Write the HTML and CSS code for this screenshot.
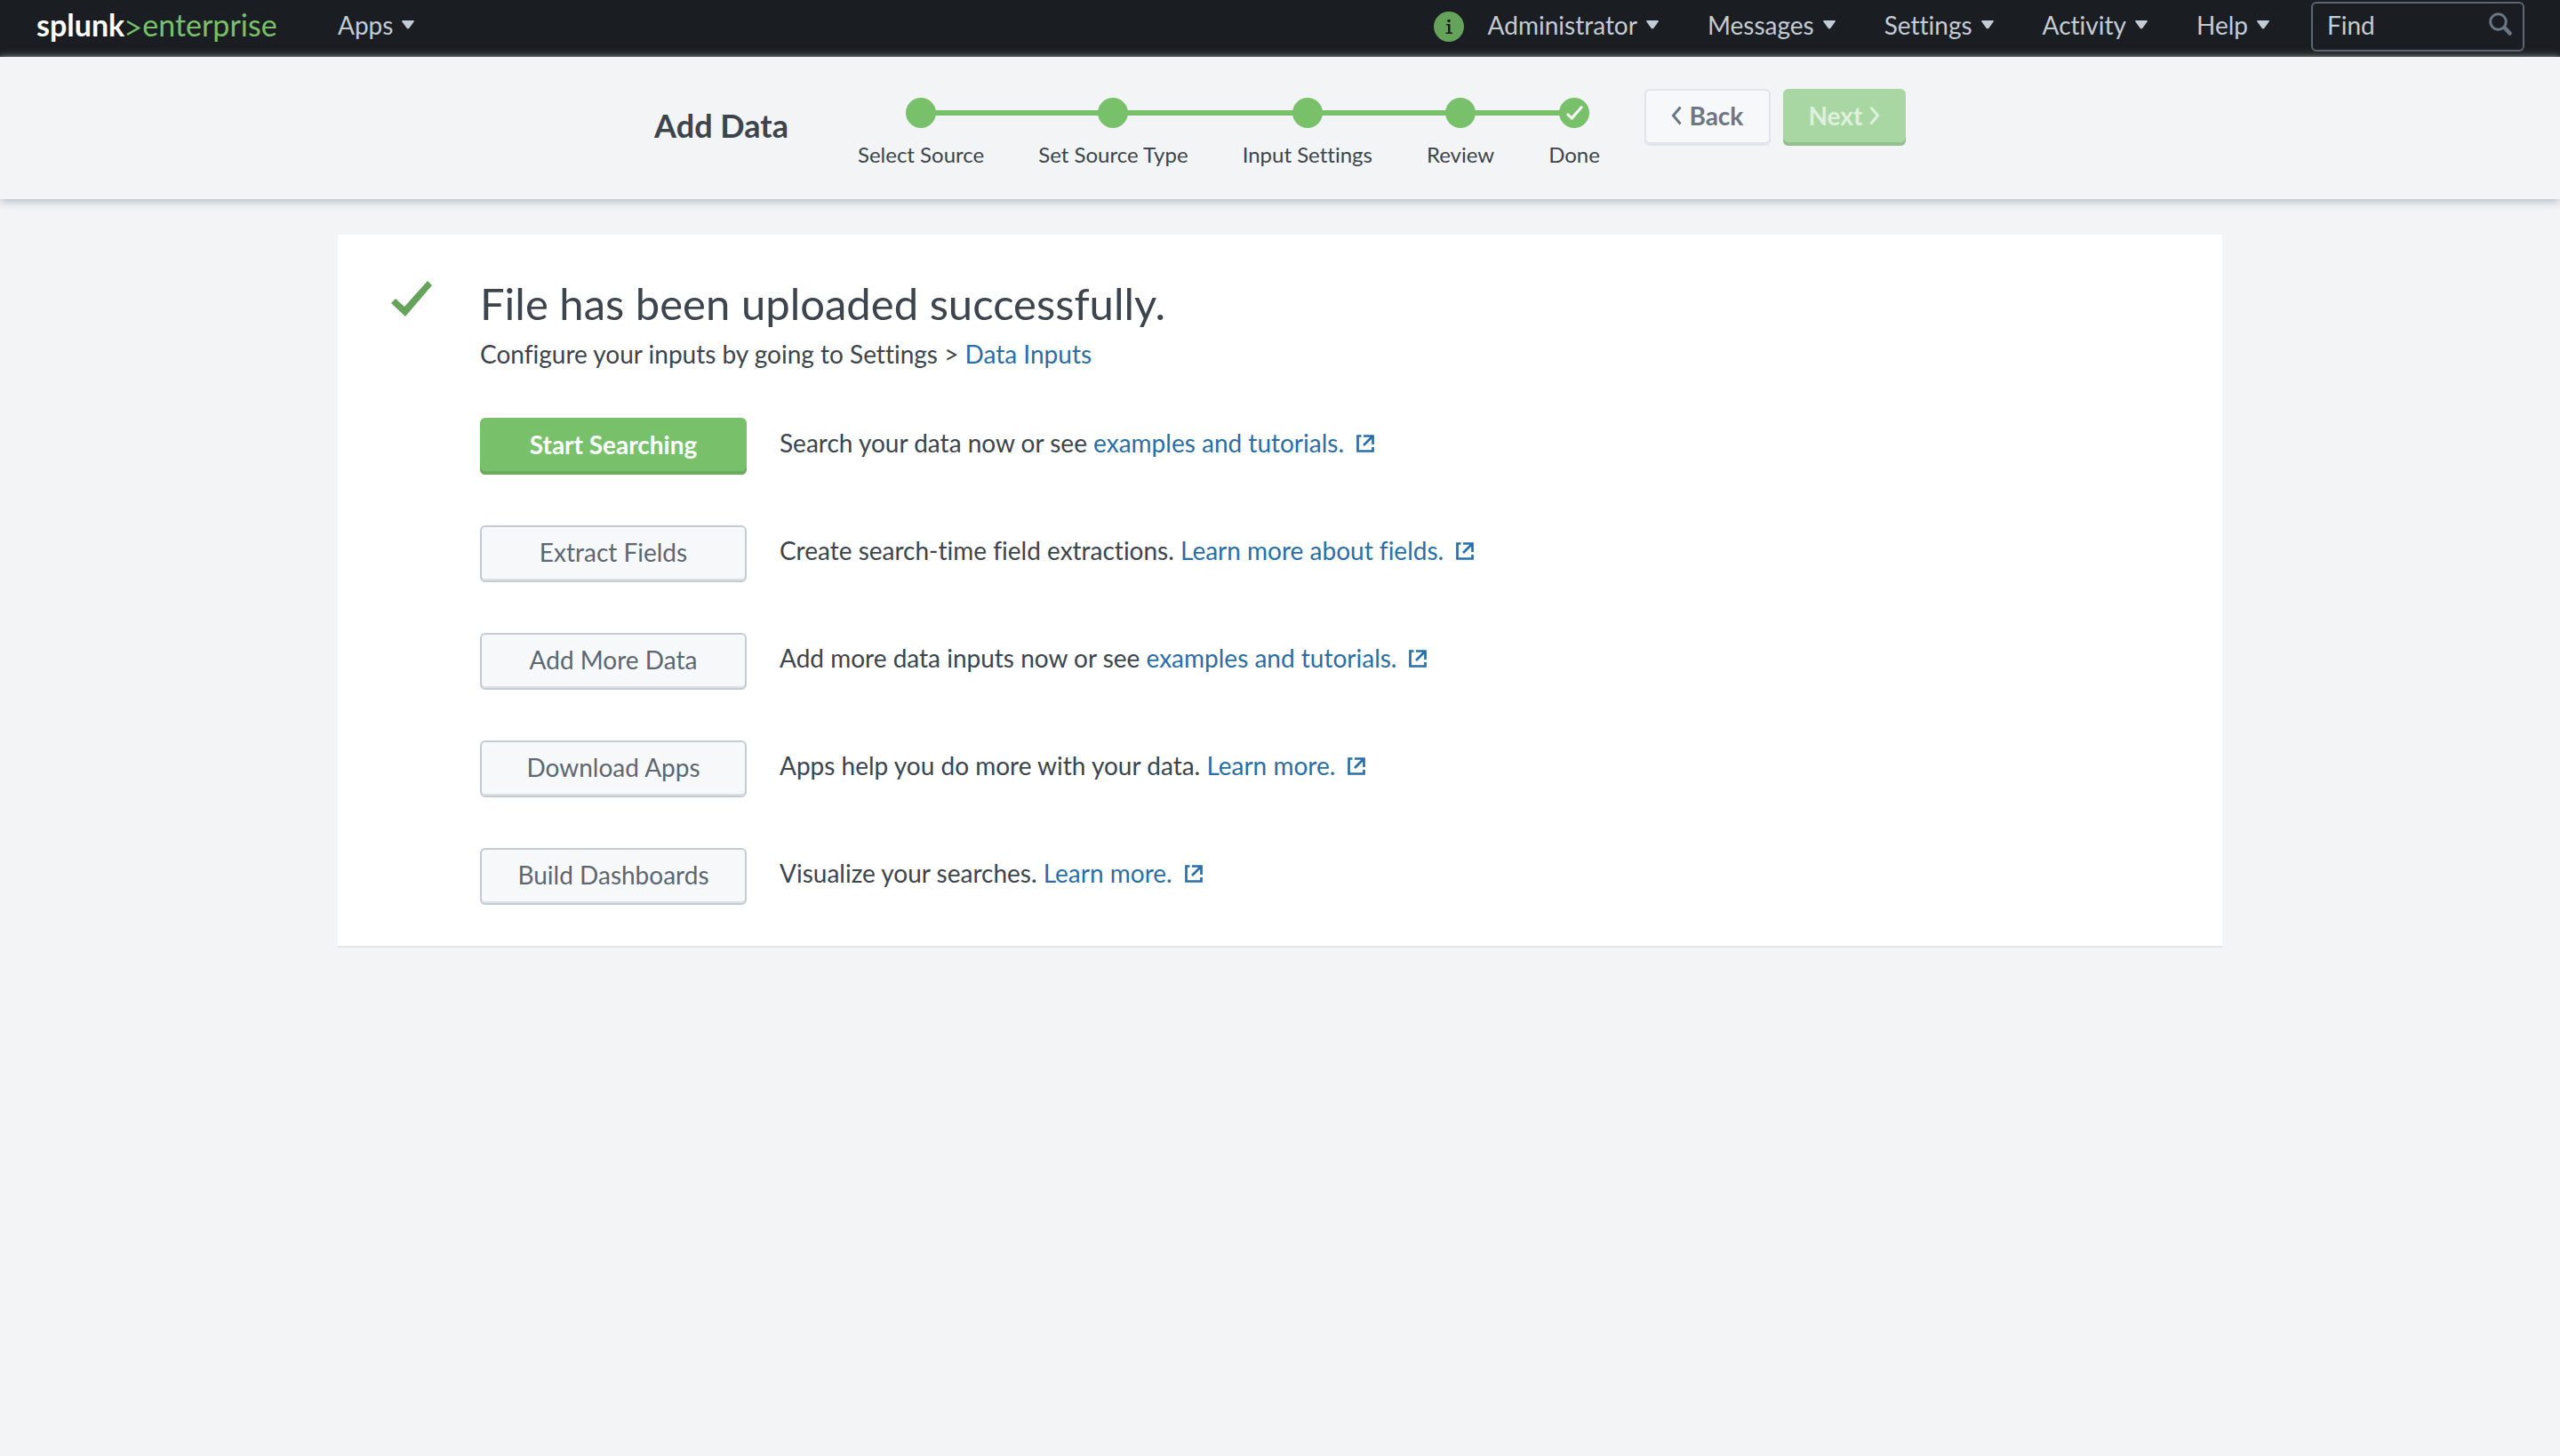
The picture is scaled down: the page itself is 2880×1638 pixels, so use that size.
FILE: index.html
```html
<!DOCTYPE html>
<html lang="en">
<head>
<meta charset="utf-8">
<title>Add Data | Splunk</title>
<link rel="stylesheet" href="styles.css">
</head>
<body>
<svg class="sprite" aria-hidden="true">
  <symbol id="caret" viewBox="0 0 16 12"><path d="M2 1h12q1.600 0 .6 1.500L9.500 9.500Q8 11.200 6.500 9.500L1.400 2.500Q.4 1 2 1z"/></symbol>
  <symbol id="external" viewBox="0 0 20 20"><path d="M5.500 1.500H1.500v17h17V14M8 1.500h10.500v9.500M18 2 8 12" fill="none" stroke="currentColor" stroke-width="2.700"/></symbol>
  <symbol id="check" viewBox="0 0 48 40"><path d="m2 25 5-5 10 9L43 0l5 5-30 35z"/></symbol>
</svg>
<header class="topbar">
  <a class="logo" href="#"><b>splunk</b><svg class="logo-mark" viewBox="0 0 16 20"><path d="M1 3 14 10.500 1 18" fill="none" stroke="currentColor" stroke-width="2.500"/></svg><span>enterprise</span></a>
  <button class="menu" type="button">Apps<svg class="caret"><use href="#caret"/></svg></button>
  <nav class="menus">
    <svg class="info" viewBox="0 0 34 34"><circle cx="17" cy="17" r="17" fill="#65a35b"/><path d="M14 14h4.500v9.500H21V25h-7.500v-1.500h2.500v-8h-2z" fill="#1a1c20"/><circle cx="17" cy="10.500" r="1.800" fill="#1a1c20"/></svg>
    <button class="menu" type="button">Administrator<svg class="caret"><use href="#caret"/></svg></button>
    <button class="menu" type="button">Messages<svg class="caret"><use href="#caret"/></svg></button>
    <button class="menu" type="button">Settings<svg class="caret"><use href="#caret"/></svg></button>
    <button class="menu" type="button">Activity<svg class="caret"><use href="#caret"/></svg></button>
    <button class="menu" type="button">Help<svg class="caret"><use href="#caret"/></svg></button>
  </nav>
  <form class="find">
    <input type="text" placeholder="Find" aria-label="Find">
    <svg viewBox="0 0 26 26"><circle cx="10.500" cy="10.500" r="8.800" fill="none" stroke="currentColor" stroke-width="3"/><path d="m17.500 17 6 6.500" stroke="currentColor" stroke-width="4.500" stroke-linecap="round"/></svg>
  </form>
</header>
<section class="wizard">
  <h1>Add Data</h1>
  <ol class="steps">
    <li><i></i>Select Source</li>
    <li><i></i>Set Source Type</li>
    <li><i></i>Input Settings</li>
    <li><i></i>Review</li>
    <li><i><svg viewBox="0 0 48 40"><use href="#check"/></svg></i>Done</li>
  </ol>
  <div class="wizard-buttons">
    <button class="btn back" type="button"><svg viewBox="0 0 12 22"><path d="M10.500 1.500 2.500 11l8 9.500"/></svg>Back</button>
    <button class="btn next" type="button" disabled>Next<svg viewBox="0 0 12 22"><path d="m1.500 1.500 8 9.500-8 9.500"/></svg></button>
  </div>
</section>
<main class="panel">
  <svg class="done" viewBox="0 0 48 40"><use href="#check"/></svg>
  <div class="content">
    <h2>File has been uploaded successfully.</h2>
    <p class="lead">Configure your inputs by going to Settings &gt; <a href="#">Data Inputs</a></p>
    <ul class="actions">
      <li><button class="btn primary" type="button">Start Searching</button><p>Search your data now or see <a href="#">examples and tutorials.<svg><use href="#external"/></svg></a></p></li>
      <li><button class="btn" type="button">Extract Fields</button><p>Create search-time field extractions. <a href="#">Learn more about fields.<svg><use href="#external"/></svg></a></p></li>
      <li><button class="btn" type="button">Add More Data</button><p>Add more data inputs now or see <a href="#">examples and tutorials.<svg><use href="#external"/></svg></a></p></li>
      <li><button class="btn" type="button">Download Apps</button><p>Apps help you do more with your data. <a href="#">Learn more.<svg><use href="#external"/></svg></a></p></li>
      <li><button class="btn" type="button">Build Dashboards</button><p>Visualize your searches. <a href="#">Learn more.<svg><use href="#external"/></svg></a></p></li>
    </ul>
  </div>
</main>
</body>
</html>
```
FILE: styles.css
```css
* { box-sizing: border-box; }

body {
  margin: 0;
  background: #f2f4f5;
  color: #3c444d;
  font: 28px/40px Lato, "Open Sans", sans-serif;
  font-variant-ligatures: no-common-ligatures;
}

h1, h2, p, ol, ul { margin: 0; padding: 0; }
ol, ul { list-style: none; }
a { color: #2a6ea8; text-decoration: none; }
button, input { font: inherit; font-variant-ligatures: inherit; color: inherit; }
.sprite { display: none; }

/* Top bar */
.topbar {
  display: flex;
  align-items: flex-start;
  height: 64px;
  padding: 0 40px;
  background: linear-gradient(#1a1e22 60px, #2b3033);
  color: #c3cbd4;
}
.logo {
  display: flex;
  width: 340px;
  padding: 8px 0 0 1px;
  color: #78c06a;
  font-size: 34px;
}
.logo b { color: #fff; }
.logo-mark { width: 16px; height: 20px; margin: 13px 2px 0; }
.menu {
  display: flex;
  align-items: center;
  gap: 9px;
  padding: 8px 0;
  border: 0;
  background: none;
}
.caret { width: 16px; height: 12px; fill: currentColor; }
.menus { display: flex; gap: 54px; margin-left: auto; }
.info { width: 34px; height: 34px; margin: 13px -27px 0 0; }
.find { display: flex; position: relative; width: 240px; margin: 2px 0 0 46px; }
.find input {
  width: 100%;
  height: 56px;
  padding: 0 50px 4px 16px;
  border: 2px solid #5c6773;
  border-radius: 6px;
  background: none;
}
.find input::placeholder { color: #c3cbd4; opacity: 1; }
.find svg { position: absolute; top: 12px; right: 14px; width: 26px; height: 26px; color: #6b7785; }

/* Wizard bar */
.wizard {
  display: flex;
  justify-content: center;
  height: 160px;
  box-shadow: 0 2px 10px #aab5bd;
}
.wizard h1 { margin: 57px 78px 0 0; font-size: 36px; line-height: 40px; }
.steps {
  display: flex;
  gap: 61px;
  margin: 46px 50px 0 0;
  font-size: 24px;
  line-height: 32px;
}
.steps li { position: relative; text-align: center; }
.steps i {
  display: flex;
  position: relative;
  align-items: center;
  justify-content: center;
  width: 34px;
  height: 34px;
  margin: 0 auto 14px;
  border-radius: 50%;
  background: #78c06a;
}
.steps i svg { width: 20px; height: 18px; fill: #fff; }
.steps li::before {
  content: "";
  position: absolute;
  top: 14px;
  right: -31px;
  left: -31px;
  height: 6px;
  background: #78c06a;
}
.steps li:first-child::before { left: 50%; }
.steps li:last-child::before { right: 50%; }
.wizard-buttons { display: flex; gap: 14px; margin-top: 36px; font-weight: 700; }

.btn {
  display: flex;
  align-items: center;
  justify-content: center;
  gap: 8px;
  height: 64px;
  padding: 0 0 4px;
  border: 2px solid #c3cbd4;
  border-radius: 6px;
  background: #f7f8fa;
  box-shadow: inset 0 -2px #dbe0e2;
  color: #5c6773;
}
.btn svg { width: 12px; height: 22px; fill: none; stroke: currentColor; stroke-width: 3; }
.back { width: 142px; border-color: #e1e4ea; box-shadow: inset 0 -2px #e1e4ea; color: #6b7785; }
.next { width: 138px; border: 0; background: #a9d7a3; box-shadow: inset 0 -4px #95c08f; color: #dff0dc; }
.primary { border: 0; background: #78c06a; box-shadow: inset 0 -4px #6aab5e; color: #fff; font-weight: 700; }

/* Result panel */
.panel {
  display: flex;
  margin: 40px 380px 0;
  padding: 48px 58px 46px;
  border-bottom: 2px solid #e1e6eb;
  background: #fff;
}
.done { width: 48px; height: 40px; margin: 4px 54px 0 0; fill: #65a35b; }
.content { flex: 1; }
h2 { font-size: 49px; line-height: 58px; font-weight: 400; }
.lead { margin: 8px 0 52px; }
.actions { display: grid; gap: 57px; }
.actions li { display: flex; gap: 37px; }
.actions .btn { width: 300px; }
.actions p { padding-top: 8px; }
.actions svg { width: 20px; height: 20px; margin-left: 14px; }
```
